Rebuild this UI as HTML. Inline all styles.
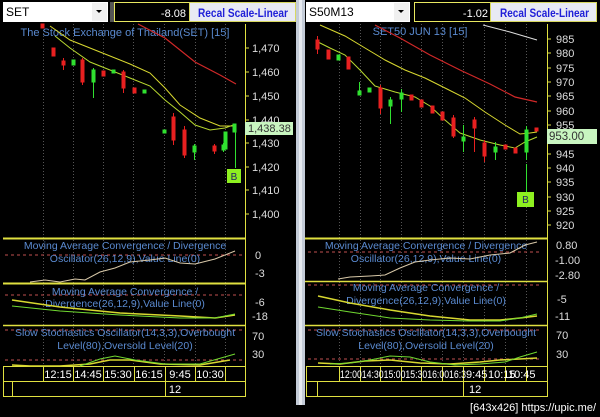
<!DOCTYPE html>
<html><head><meta charset="utf-8"><style>
html,body{margin:0;padding:0;background:#000;width:600px;height:417px;overflow:hidden}
svg{display:block}
text{font-family:"Liberation Sans",sans-serif}
</style></head><body>
<svg width="600" height="417" viewBox="0 0 600 417" xmlns="http://www.w3.org/2000/svg">
<rect width="600" height="417" fill="#000"/>
<rect x="296" y="0" width="9" height="405" fill="#c4ccd8"/>
<rect x="299" y="0" width="3" height="405" fill="#e6eaf0"/>

<!-- LEFT HEADER -->
<rect x="3" y="2" width="105" height="20" fill="#fff"/>
<text x="6" y="16" font-size="12" fill="#000">SET</text>
<rect x="92" y="3" width="15" height="18" fill="#f0f0f0"/>
<polygon points="96,10 102,10 99,13" fill="#000"/>
<rect x="110" y="2" width="4" height="20" fill="#555"/>
<rect x="114.5" y="2.5" width="75" height="19" fill="#000" stroke="#e8e860"/>
<text x="186" y="17" font-size="11" fill="#fff" text-anchor="end">-8.08</text>
<rect x="189.5" y="2.5" width="106" height="19" fill="#e8eaf4" stroke="#d8d860"/>
<text x="198" y="17" font-size="11.5" font-weight="bold" fill="#2020d8" textLength="90" lengthAdjust="spacingAndGlyphs">Recal Scale-Linear</text>

<!-- RIGHT HEADER -->
<rect x="306" y="2" width="104" height="20" fill="#fff"/>
<text x="309" y="16" font-size="12" fill="#000">S50M13</text>
<rect x="394" y="3" width="15" height="18" fill="#f0f0f0"/>
<polygon points="398,10 404,10 401,13" fill="#000"/>
<rect x="414.5" y="2.5" width="76" height="19" fill="#000" stroke="#e8e860"/>
<text x="488" y="17" font-size="11" fill="#fff" text-anchor="end">-1.02</text>
<rect x="490.5" y="2.5" width="106" height="19" fill="#e8eaf4" stroke="#d8d860"/>
<text x="500" y="17" font-size="11.5" font-weight="bold" fill="#2020d8" textLength="89" lengthAdjust="spacingAndGlyphs">Recal Scale-Linear</text>

<!-- LEFT CHART -->
<g stroke="#555" stroke-dasharray="1,2" stroke-width="1">
<line x1="43.5" y1="24" x2="43.5" y2="366"/><line x1="73.5" y1="24" x2="73.5" y2="366"/>
<line x1="103.5" y1="24" x2="103.5" y2="366"/><line x1="133.5" y1="24" x2="133.5" y2="366"/>
<line x1="164.5" y1="24" x2="164.5" y2="366"/><line x1="195.5" y1="24" x2="195.5" y2="366"/>
<line x1="225.5" y1="24" x2="225.5" y2="366"/>
</g>
<line x1="245.5" y1="24" x2="245.5" y2="397" stroke="#e0e040"/>
<g fill="#ddd" font-size="11">
<text x="252" y="52">1,470</text><text x="252" y="76">1,460</text><text x="252" y="100">1,450</text>
<text x="252" y="124">1,440</text><text x="252" y="147">1,430</text><text x="252" y="171">1,420</text>
<text x="252" y="194">1,410</text><text x="252" y="218">1,400</text>
</g>
<g stroke="#e0e040"><line x1="245" y1="48" x2="249" y2="48"/><line x1="245" y1="72" x2="249" y2="72"/><line x1="245" y1="96" x2="249" y2="96"/><line x1="245" y1="120" x2="249" y2="120"/><line x1="245" y1="143" x2="249" y2="143"/><line x1="245" y1="167" x2="249" y2="167"/><line x1="245" y1="190" x2="249" y2="190"/><line x1="245" y1="214" x2="249" y2="214"/></g>
<text x="125" y="36" font-size="11" fill="#5a8ad0" text-anchor="middle">The Stock Exchange of Thailand(SET) [15]</text>
<polyline fill="none" stroke="#d02828" stroke-width="1.2" points="138,24 165,38 195,62 220,75 236,84"/>
<polyline fill="none" stroke="#d8d830" stroke-width="1" points="50,26 70,40 100,52 130,64 150,73 165,88 180,105 200,118 220,126 236,126"/>
<polyline fill="none" stroke="#b8d830" stroke-width="1" points="55,36 70,48 90,62 110,70 130,78 150,86 165,100 180,112 195,125 210,130 225,128 236,124"/>
<g fill="#e82020" stroke="#e82020">
<rect x="41" y="24" width="3" height="4"/><rect x="52" y="48" width="3" height="8"/><rect x="62" y="61" width="3" height="4"/><line x1="63.5" y1="58" x2="63.5" y2="70"/>
<rect x="81" y="60" width="3" height="22"/><line x1="82.5" y1="58" x2="82.5" y2="85"/>
<rect x="102" y="71" width="3" height="5"/><rect x="122" y="72" width="3" height="16"/><line x1="123.5" y1="70" x2="123.5" y2="93"/>
<rect x="133" y="88" width="3" height="5"/>
<rect x="172" y="117" width="3" height="23"/><line x1="173.5" y1="113" x2="173.5" y2="145"/>
<rect x="183" y="130" width="3" height="25"/><line x1="184.5" y1="126" x2="184.5" y2="158"/>
<rect x="213" y="146" width="3" height="5"/><line x1="214.5" y1="144" x2="214.5" y2="154"/>
</g>
<g fill="#30e030" stroke="#30e030">
<rect x="72" y="60" width="3" height="5"/><rect x="92" y="70" width="3" height="12"/><line x1="93.5" y1="68" x2="93.5" y2="98"/>
<rect x="112" y="70" width="3" height="3"/><rect x="143" y="90" width="3" height="3"/>
<rect x="163" y="130" width="3" height="3"/><rect x="193" y="146" width="3" height="6"/><line x1="194.5" y1="144" x2="194.5" y2="160"/>
<rect x="222" y="145" width="3" height="5"/><line x1="223.5" y1="143" x2="223.5" y2="152"/>
<rect x="224" y="132" width="3" height="17"/>
<rect x="233" y="124" width="3" height="8"/>
</g>
<line x1="235.5" y1="132" x2="235.5" y2="168" stroke="#30e030"/>
<rect x="227" y="169" width="14" height="14" fill="#8ef020"/>
<text x="234" y="180" font-size="10" fill="#226" text-anchor="middle">B</text>
<rect x="245" y="122" width="48" height="13" fill="#c8f5c0"/>
<text x="248" y="132" font-size="11" fill="#333">1,438.38</text>

<g stroke="#e0e040" fill="none">
<line x1="3" y1="238.5" x2="245" y2="238.5" stroke-width="2"/>
<line x1="3" y1="283.5" x2="245" y2="283.5" stroke-width="2"/>
<line x1="3" y1="325.5" x2="245" y2="325.5" stroke-width="1.5"/>
<rect x="3.5" y="366.5" width="242" height="15"/>
<rect x="3.5" y="381.5" width="242" height="15"/>
<line x1="12.5" y1="382" x2="12.5" y2="397"/>
<line x1="165.5" y1="382" x2="165.5" y2="397"/>
<line x1="43.5" y1="367" x2="43.5" y2="381"/><line x1="73.5" y1="367" x2="73.5" y2="381"/><line x1="103.5" y1="367" x2="103.5" y2="381"/><line x1="134.5" y1="367" x2="134.5" y2="381"/><line x1="165.5" y1="367" x2="165.5" y2="381"/><line x1="195.5" y1="367" x2="195.5" y2="381"/><line x1="225.5" y1="367" x2="225.5" y2="381"/>
</g>
<g stroke="#c05050" stroke-dasharray="3,3"><line x1="5" y1="255" x2="245" y2="255"/><line x1="5" y1="295" x2="245" y2="295"/><line x1="5" y1="330" x2="245" y2="330"/><line x1="5" y1="360" x2="245" y2="360"/></g>
<g font-size="10.5" fill="#5a8ad0" text-anchor="middle">
<text x="125" y="249">Moving Average Convergence / Divergence</text>
<text x="125" y="262">Oscillator(26,12,9),Value Line(0)</text>
<text x="125" y="295">Moving Average Convergence /</text>
<text x="125" y="307">Divergence(26,12,9),Value Line(0)</text>
<text x="125" y="336">Slow Stochastics Oscillator(14,3,3),Overbought</text>
<text x="125" y="349">Level(80),Oversold Level(20)</text>
</g>
<polyline fill="none" stroke="#d8c8a8" points="30,282 45,280 60,282 75,279 85,280 100,272 115,268 130,262 150,260 165,258 180,263 195,264 215,259 235,251"/>
<polyline fill="none" stroke="#d8d830" stroke-width="1.5" points="12,300 60,307 120,313 180,316 215,318 235,315"/>
<polyline fill="none" stroke="#70d830" points="12,306 60,311 120,315 180,318 215,318 235,314"/>
<polyline fill="none" stroke="#d8d830" stroke-width="1.5" points="12,365 30,366 60,366 90,364 110,360 130,360 160,364 200,365 230,360"/>
<polyline fill="none" stroke="#70d830" points="80,366 100,359 115,356 135,360 165,364 200,364 235,354"/>
<g fill="#ddd" font-size="11">
<text x="255" y="259">0</text><text x="255" y="277">-3</text><text x="255" y="306">-6</text><text x="252" y="320">-18</text>
<text x="252" y="340">70</text><text x="252" y="358">30</text>
</g>
<g fill="#fff" font-size="11" text-anchor="middle">
<text x="58" y="378">12:15</text><text x="88" y="378">14:45</text><text x="118" y="378">15:30</text><text x="149" y="378">16:15</text><text x="180" y="378">9:45</text><text x="210" y="378">10:30</text>
<text x="175" y="393">12</text>
</g>

<!-- RIGHT CHART -->
<g stroke="#555" stroke-dasharray="1,2">
<line x1="339.5" y1="24" x2="339.5" y2="366"/><line x1="360.5" y1="24" x2="360.5" y2="366"/><line x1="380.5" y1="24" x2="380.5" y2="366"/><line x1="401.5" y1="24" x2="401.5" y2="366"/><line x1="421.5" y1="24" x2="421.5" y2="366"/><line x1="442.5" y1="24" x2="442.5" y2="366"/><line x1="463.5" y1="24" x2="463.5" y2="366"/><line x1="484.5" y1="24" x2="484.5" y2="366"/><line x1="505.5" y1="24" x2="505.5" y2="366"/><line x1="526.5" y1="24" x2="526.5" y2="366"/>
</g>
<line x1="547.5" y1="24" x2="547.5" y2="397" stroke="#e0e040"/>
<g fill="#ddd" font-size="11">
<text x="556" y="43">985</text><text x="556" y="57">980</text><text x="556" y="72">975</text><text x="556" y="86">970</text><text x="556" y="100">965</text><text x="556" y="115">960</text><text x="556" y="129">955</text>
<text x="556" y="158">945</text><text x="556" y="172">940</text><text x="556" y="186">935</text><text x="556" y="201">930</text><text x="556" y="215">925</text><text x="556" y="229">920</text>
</g>
<g stroke="#e0e040"><line x1="547" y1="39" x2="551" y2="39"/><line x1="547" y1="53" x2="551" y2="53"/><line x1="547" y1="68" x2="551" y2="68"/><line x1="547" y1="82" x2="551" y2="82"/><line x1="547" y1="96" x2="551" y2="96"/><line x1="547" y1="111" x2="551" y2="111"/><line x1="547" y1="125" x2="551" y2="125"/><line x1="547" y1="154" x2="551" y2="154"/><line x1="547" y1="168" x2="551" y2="168"/><line x1="547" y1="182" x2="551" y2="182"/><line x1="547" y1="197" x2="551" y2="197"/><line x1="547" y1="211" x2="551" y2="211"/><line x1="547" y1="225" x2="551" y2="225"/></g>
<text x="420" y="35" font-size="11" fill="#5a8ad0" text-anchor="middle">SET50 JUN 13   [15]</text>
<polyline fill="none" stroke="#ddd" points="483,25 510,32 537,40"/>
<polyline fill="none" stroke="#d02828" stroke-width="1.2" points="375,25 400,38 430,55 460,70 490,84 515,97 537,102"/>
<polyline fill="none" stroke="#d8d830" points="320,25 345,36 365,48 385,60 405,70 425,78 445,88 465,98 485,112 505,125 520,134 530,133 537,132"/>
<polyline fill="none" stroke="#b8d830" points="318,42 330,48 345,55 360,70 375,86 395,92 415,97 430,106 445,120 460,133 480,140 500,145 515,148 525,142 537,137"/>
<g fill="#e82020" stroke="#e82020">
<rect x="316" y="40" width="3" height="9"/><line x1="317.5" y1="36" x2="317.5" y2="54"/>
<rect x="327" y="50" width="3" height="9"/><rect x="347" y="57" width="3" height="12"/>
<rect x="379" y="88" width="3" height="20"/><line x1="380.5" y1="85" x2="380.5" y2="114"/>
<rect x="410" y="95" width="3" height="5"/><rect x="420" y="100" width="3" height="7"/>
<rect x="431" y="106" width="3" height="7"/><rect x="441" y="112" width="3" height="8"/>
<rect x="452" y="118" width="3" height="18"/><line x1="453.5" y1="115" x2="453.5" y2="138"/>
<rect x="473" y="120" width="3" height="8"/><line x1="474.5" y1="117" x2="474.5" y2="152"/>
<rect x="483" y="143" width="3" height="13"/><line x1="484.5" y1="140" x2="484.5" y2="162"/>
<rect x="504" y="145" width="3" height="4"/><rect x="514" y="148" width="3" height="5"/>
<rect x="535" y="128" width="3" height="3"/>
</g>
<g fill="#30e030" stroke="#30e030">
<rect x="337" y="55" width="3" height="5"/><rect x="358" y="91" width="3" height="4"/><line x1="359.5" y1="82" x2="359.5" y2="95"/>
<rect x="368" y="88" width="3" height="4"/>
<rect x="389" y="100" width="3" height="6"/><line x1="390.5" y1="97" x2="390.5" y2="124"/>
<rect x="400" y="93" width="3" height="6"/><line x1="401.5" y1="89" x2="401.5" y2="112"/>
<rect x="462" y="137" width="3" height="4"/><line x1="463.5" y1="125" x2="463.5" y2="152"/>
<rect x="494" y="147" width="3" height="5"/><line x1="495.5" y1="142" x2="495.5" y2="160"/>
<rect x="525" y="130" width="3" height="22"/><line x1="526.5" y1="126" x2="526.5" y2="160"/>
</g>
<line x1="526.5" y1="164" x2="526.5" y2="192" stroke="#30e030"/>
<rect x="517" y="192" width="17" height="15" fill="#8ef020"/>
<text x="525.5" y="203" font-size="10" fill="#226" text-anchor="middle">B</text>
<rect x="547" y="129" width="50" height="15" fill="#c8f5c0"/>
<text x="549" y="140" font-size="11.5" fill="#333">953.00</text>

<g stroke="#e0e040" fill="none">
<line x1="305" y1="238.5" x2="547" y2="238.5" stroke-width="2"/>
<line x1="305" y1="281.5" x2="547" y2="281.5" stroke-width="1.5"/>
<line x1="305" y1="325.5" x2="547" y2="325.5" stroke-width="1.5"/>
<rect x="306.5" y="366.5" width="241" height="15"/>
<rect x="306.5" y="381.5" width="241" height="15"/>
<line x1="317.5" y1="382" x2="317.5" y2="397"/><line x1="463.5" y1="382" x2="463.5" y2="397"/>
<line x1="339.5" y1="367" x2="339.5" y2="381"/><line x1="360.5" y1="367" x2="360.5" y2="381"/><line x1="380.5" y1="367" x2="380.5" y2="381"/><line x1="401.5" y1="367" x2="401.5" y2="381"/><line x1="421.5" y1="367" x2="421.5" y2="381"/><line x1="442.5" y1="367" x2="442.5" y2="381"/><line x1="463.5" y1="367" x2="463.5" y2="381"/><line x1="484.5" y1="367" x2="484.5" y2="381"/><line x1="505.5" y1="367" x2="505.5" y2="381"/><line x1="526.5" y1="367" x2="526.5" y2="381"/>
</g>
<g stroke="#c05050" stroke-dasharray="3,3"><line x1="308" y1="252" x2="540" y2="252"/><line x1="308" y1="285" x2="540" y2="285"/><line x1="308" y1="330" x2="540" y2="330"/><line x1="308" y1="359" x2="540" y2="359"/></g>
<g font-size="10.5" fill="#5a8ad0" text-anchor="middle">
<text x="426" y="249">Moving Average Convergence / Divergence</text>
<text x="426" y="262">Oscillator(26,12,9),Value Line(0)</text>
<text x="426" y="291">Moving Average Convergence /</text>
<text x="426" y="304">Divergence(26,12,9),Value Line(0)</text>
<text x="426" y="336">Slow Stochastics Oscillator(14,3,3),Overbought</text>
<text x="426" y="349">Level(80),Oversold Level(20)</text>
</g>
<polyline fill="none" stroke="#d8c8a8" points="338,279 350,277 370,276 385,275 400,268 415,262 430,260 450,258 470,259 490,255 510,253 525,245 537,242"/>
<polyline fill="none" stroke="#d8d830" stroke-width="1.5" points="318,296 350,303 390,310 430,316 470,320 500,320 520,318 537,316"/>
<polyline fill="none" stroke="#70d830" points="318,307 350,312 390,318 430,320 470,321 500,321 520,318 537,314"/>
<polyline fill="none" stroke="#d8d830" stroke-width="1.5" points="318,363 340,364 365,361 390,360 420,363 450,364 480,362 500,360 537,358"/>
<polyline fill="none" stroke="#70d830" points="330,364 350,363 370,360 390,356 410,357 430,362 455,365 480,364 505,362 520,357 537,352"/>
<g fill="#ddd" font-size="11">
<text x="556" y="249">0.80</text><text x="555" y="264">-1.00</text><text x="555" y="279">-2.80</text>
<text x="557" y="303">-5</text><text x="555" y="320">-11</text><text x="556" y="339">70</text><text x="556" y="358">30</text>
</g>
<g fill="#fff" font-size="11">
<text x="340" y="378" textLength="126" lengthAdjust="spacingAndGlyphs">12:0014:3015:0015:3016:0016:3</text>
<text x="466" y="378">9:45</text><text x="488" y="378">10:15</text><text x="508" y="378">10:45</text>
<text x="469" y="393">12</text>
</g>

<text x="596" y="411" font-size="11" fill="#fff" text-anchor="end" font-family="Liberation Mono, monospace">[643x426] https://upic.me/</text>
</svg>
</body></html>
